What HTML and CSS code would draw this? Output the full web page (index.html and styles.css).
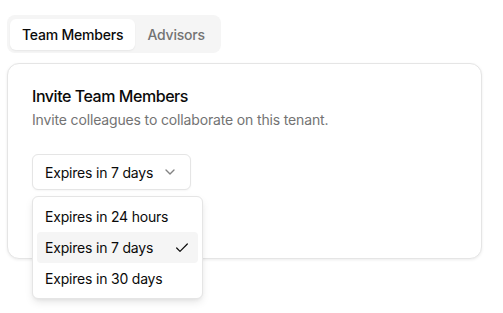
FILE: index.html
```html
<!DOCTYPE html>
<html lang="en">
<head>
<meta charset="utf-8">
<link rel="stylesheet" href="styles.css">
</head>
<body>
<div class="page">
  <div class="tabs">
    <div class="tab tab-active">Team Members</div>
    <div class="tab">Advisors</div>
  </div>
  <div class="card">
    <div class="card-header">
      <h3 class="card-title">Invite Team Members</h3>
      <p class="card-desc">Invite colleagues to collaborate on this tenant.</p>
    </div>
    <div class="card-content">
      <div class="select">
        <button class="trigger">
          <span>Expires in 7 days</span>
          <svg class="chev" width="16" height="16" viewBox="0 0 24 24" fill="none" stroke="currentColor" stroke-width="2" stroke-linecap="round" stroke-linejoin="round"><path d="m6 9 6 6 6-6"/></svg>
        </button>
        <div class="menu">
          <div class="item">Expires in 24 hours</div>
          <div class="item item-active">Expires in 7 days
            <svg class="check" width="16" height="16" viewBox="0 0 24 24" fill="none" stroke="currentColor" stroke-width="1.8" stroke-linecap="round" stroke-linejoin="round"><path d="M20 6 9 17l-5-5"/></svg>
          </div>
          <div class="item">Expires in 30 days</div>
        </div>
      </div>
    </div>
  </div>
</div>
</body>
</html>
```
FILE: styles.css
```css
* { box-sizing: border-box; }
html, body { margin: 0; background: #fff; }
body {
  font-family: "Inter", "Noto Sans", sans-serif;
  color: #0a0a0a;
  font-size: 14px;
  letter-spacing: -0.2px;
  min-height: 313px;
}
.page { padding: 15px 7px 40px 7px; min-height: 313px; }
.tabs {
  display: inline-flex;
  align-items: center;
  height: 38px;
  padding: 4px 4px 4px 3px;
  background: #f5f5f5;
  border-radius: 8px;
}
.tab {
  height: 31px;
  display: flex;
  align-items: center;
  padding: 0 12px;
  font-size: 14px;
  font-weight: 500;
  color: #737373;
  border-radius: 6px;
}
.tab-active {
  background: #fff;
  color: #0a0a0a;
  box-shadow: 0 1px 2px rgba(0,0,0,0.06);
}
.card {
  margin-top: 10px;
  width: 475px;
  border: 1px solid #e5e5e5;
  border-radius: 12px;
  box-shadow: 0 1px 3px rgba(0,0,0,0.08);
  background: #fff;
}
.card-header {
  padding: 24px;
  display: flex;
  flex-direction: column;
  gap: 6px;
}
.card-title {
  margin: 0;
  font-size: 16px;
  line-height: 16px;
  font-weight: 500;
  letter-spacing: -0.45px;
}
.card-desc {
  margin: 0;
  font-size: 14px;
  line-height: 20px;
  color: #737373;
  letter-spacing: -0.15px;
}
.card-content {
  padding: 0 24px 24px;
  min-height: 104px;
}
.select { position: relative; display: inline-block; }
.trigger {
  display: flex;
  align-items: center;
  gap: 9px;
  height: 36px;
  padding: 0 12px;
  background: #fff;
  border: 1px solid #e5e5e5;
  border-radius: 6px;
  box-shadow: 0 1px 2px rgba(0,0,0,0.04);
  font: inherit;
  font-size: 14px;
  letter-spacing: -0.2px;
  color: #0a0a0a;
}
.chev { opacity: 0.5; flex: none; }
.menu {
  position: absolute;
  z-index: 10;
  top: 42px;
  left: 0;
  width: 171px;
  padding: 4px;
  background: #fff;
  border: 1px solid #e5e5e5;
  border-radius: 6px;
  box-shadow: 0 4px 8px -1px rgba(0,0,0,0.1), 0 2px 4px -2px rgba(0,0,0,0.08);
}
.item {
  position: relative;
  height: 31px;
  display: flex;
  align-items: center;
  padding: 0 32px 0 8px;
  border-radius: 4px;
  font-size: 14px;
  white-space: nowrap;
}
.item-active { background: #f5f5f5; }
.check { position: absolute; right: 8px; top: 8px; }
```
